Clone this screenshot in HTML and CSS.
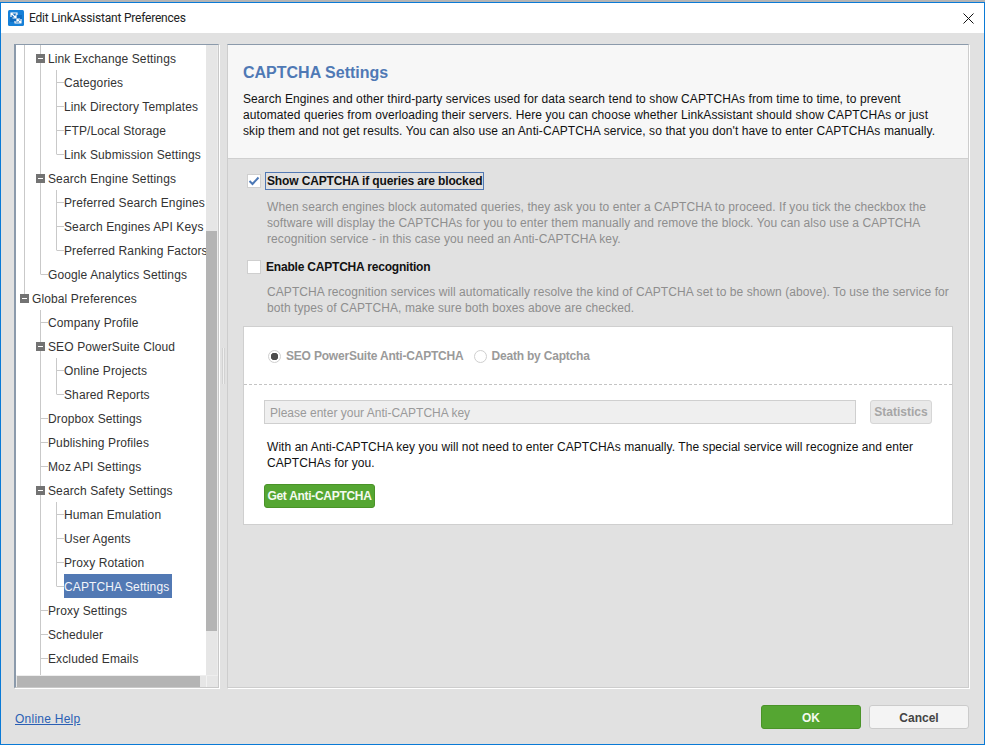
FILE: index.html
```html
<!DOCTYPE html>
<html lang="en">
<head>
<meta charset="utf-8">
<title>Edit LinkAssistant Preferences</title>
<link rel="stylesheet" href="styles.css">
</head>
<body>
<div class="window">
  <header class="titlebar">
    <svg class="app-icon" width="16" height="16" viewBox="0 0 16 16"><rect width="16" height="16" rx="1.5" fill="#1580d8"/><path d="M2 3v9h4v2h8V5h-4V3z" fill="#0f6cc0"/><path d="M3 7V3h6v2M3.5 3.5L8 8M8 4.5V8H4.5" fill="none" stroke="#fff" stroke-width="1.2"/><path d="M13 9v4H7v-2M12.5 12.5L9 9M9 12V9h3" fill="none" stroke="#fff" stroke-width="1.2"/></svg>
    <span class="title-text">Edit LinkAssistant Preferences</span>
    <svg class="close-icon" width="11" height="11" viewBox="0 0 11 11"><path d="M.5.5l10 10M10.5.5l-10 10" stroke="#111" stroke-width="1" fill="none"/></svg>
  </header>
  <div class="content">
    <div class="panes">
      <nav class="tree">
        <div class="tree-top">
          <div class="tree-view">
            <svg class="guides" width="191" height="630" viewBox="15 45 191 630">
              <path d="M24.5 45V294M40.5 45V274.5M56.5 70V154.5M56.5 190V250.5M40.5 310V675M56.5 358V394.5M56.5 502V586.5" fill="none" stroke="#c9c9c9"/>
              <path d="M57 82.5h7M57 106.5h7M57 130.5h7M57 154.5h7M57 202.5h7M57 226.5h7M57 250.5h7M41 274.5h7M41 322.5h7M57 370.5h7M57 394.5h7M41 418.5h7M41 442.5h7M41 466.5h7M57 514.5h7M57 538.5h7M57 562.5h7M57 586.5h7M41 610.5h7M41 634.5h7M41 658.5h7" fill="none" stroke="#c9c9c9"/>
            </svg>
            <div class="row l1 group"><i class="minus"></i><span>Link Exchange Settings</span></div>
            <div class="row l2"><span>Categories</span></div>
            <div class="row l2"><span>Link Directory Templates</span></div>
            <div class="row l2"><span>FTP/Local Storage</span></div>
            <div class="row l2"><span>Link Submission Settings</span></div>
            <div class="row l1 group"><i class="minus"></i><span>Search Engine Settings</span></div>
            <div class="row l2"><span>Preferred Search Engines</span></div>
            <div class="row l2"><span>Search Engines API Keys</span></div>
            <div class="row l2"><span>Preferred Ranking Factors</span></div>
            <div class="row l1"><span>Google Analytics Settings</span></div>
            <div class="row l0 group"><i class="minus"></i><span>Global Preferences</span></div>
            <div class="row l1"><span>Company Profile</span></div>
            <div class="row l1 group"><i class="minus"></i><span>SEO PowerSuite Cloud</span></div>
            <div class="row l2"><span>Online Projects</span></div>
            <div class="row l2"><span>Shared Reports</span></div>
            <div class="row l1"><span>Dropbox Settings</span></div>
            <div class="row l1"><span>Publishing Profiles</span></div>
            <div class="row l1"><span>Moz API Settings</span></div>
            <div class="row l1 group"><i class="minus"></i><span>Search Safety Settings</span></div>
            <div class="row l2"><span>Human Emulation</span></div>
            <div class="row l2"><span>User Agents</span></div>
            <div class="row l2"><span>Proxy Rotation</span></div>
            <div class="row l2"><span class="selected">CAPTCHA Settings</span></div>
            <div class="row l1"><span>Proxy Settings</span></div>
            <div class="row l1"><span>Scheduler</span></div>
            <div class="row l1"><span>Excluded Emails</span></div>
          </div>
          <div class="vscroll"><div class="vthumb"></div></div>
        </div>
        <div class="hscroll"><div class="hthumb"></div><div class="corner"></div></div>
      </nav>
      <div class="splitter"><div class="grip"></div></div>
      <main class="main">
        <section class="intro">
          <h1>CAPTCHA Settings</h1>
          <p>Search Engines and other third-party services used for data search tend to show CAPTCHAs from time to time, to prevent<br>automated queries from overloading their servers. Here you can choose whether LinkAssistant should show CAPTCHAs or just<br>skip them and not get results. You can also use an Anti-CAPTCHA service, so that you don't have to enter CAPTCHAs manually.</p>
        </section>
        <section class="settings">
          <div class="check-row first">
            <span class="checkbox"><svg width="12" height="10" viewBox="0 0 12 10"><path d="M1.5 5l3 3 6-6.5" fill="none" stroke="#4c78b6" stroke-width="2"/></svg></span>
            <span class="check-label focused">Show CAPTCHA if queries are blocked</span>
          </div>
          <p class="desc">When search engines block automated queries, they ask you to enter a CAPTCHA to proceed. If you tick the checkbox the<br>software will display the CAPTCHAs for you to enter them manually and remove the block. You can also use a CAPTCHA<br>recognition service - in this case you need an Anti-CAPTCHA key.</p>
          <div class="check-row second">
            <span class="checkbox"></span>
            <span class="check-label">Enable CAPTCHA recognition</span>
          </div>
          <p class="desc tight">CAPTCHA recognition services will automatically resolve the kind of CAPTCHA set to be shown (above). To use the service for<br>both types of CAPTCHA, make sure both boxes above are checked.</p>
          <div class="service">
            <div class="radios">
              <span class="radio on"></span><span class="radio-label">SEO PowerSuite Anti-CAPTCHA</span>
              <span class="radio second-radio"></span><span class="radio-label">Death by Captcha</span>
            </div>
            <div class="service-body">
              <div class="key-row">
                <div class="key-input">Please enter your Anti-CAPTCHA key</div>
                <div class="stats-btn">Statistics</div>
              </div>
              <p class="service-note">With an Anti-CAPTCHA key you will not need to enter CAPTCHAs manually. The special service will recognize and enter<br>CAPTCHAs for you.</p>
              <div class="btn green get-btn">Get Anti-CAPTCHA</div>
            </div>
          </div>
        </section>
      </main>
    </div>
    <footer class="footer">
      <a class="help" href="#">Online Help</a>
      <div class="actions">
        <div class="btn green ok-btn">OK</div>
        <div class="btn cancel-btn">Cancel</div>
      </div>
    </footer>
  </div>
</div>
</body>
</html>
```
FILE: styles.css
```css
* { box-sizing: border-box; }
html, body { margin: 0; padding: 0; }
body {
  width: 985px;
  height: 745px;
  overflow: hidden;
  background: #b4b4b4;
  padding-top: 2px;
  font: 12px/16px "Liberation Sans", Arial, sans-serif;
  color: #333;
}
.window {
  height: 743px;
  display: flex;
  flex-direction: column;
  background: #e1e1e1;
  border: 1px solid #0a7ad6;
}
.titlebar {
  height: 30px;
  flex: none;
  display: flex;
  align-items: center;
  background: #fff;
  padding: 0 10px 0 7px;
}
.app-icon { flex: none; }
.title-text {
  margin-left: 5px;
  font-family: Roboto, "Noto Sans", sans-serif;
  font-size: 12px;
  letter-spacing: -.2px;
  color: #222;
}
.close-icon { margin-left: auto; }
.content {
  flex: 1;
  min-height: 0;
  display: flex;
  flex-direction: column;
  padding: 11px 15px 0 13px;
}
.panes { height: 644px; flex: none; display: flex; }
.tree {
  width: 205px;
  flex: none;
  display: flex;
  flex-direction: column;
  background: #fff;
  border: 1px solid #c9c9c9;
  border-top-color: #8b9aab;
  border-left: 2px solid #8b9aab;
  box-shadow: 1px 1px 0 #fff;
}
.tree-top { flex: 1; min-height: 0; display: flex; }
.tree-view {
  position: relative;
  flex: 1;
  min-width: 0;
  overflow: hidden;
  padding-top: 1px;
}
.guides { position: absolute; left: -1px; top: 0; }
.row {
  position: relative;
  height: 24px;
  display: flex;
  align-items: center;
  white-space: nowrap;
  letter-spacing: .12px;
}
.row span { height: 24px; line-height: 26px; }
.l0 { padding-left: 16px; }
.l1 { padding-left: 32px; }
.l2 { padding-left: 48px; }
.group.l0 { padding-left: 4px; }
.group.l1 { padding-left: 20px; }
.minus {
  flex: none;
  width: 9px;
  height: 9px;
  margin-right: 3px;
  margin-top: 1px;
  background: linear-gradient(#fff, #fff) center / 5px 1px no-repeat #737373;
}
.selected { background: #5279b4; color: #f2f5fa; padding-right: 3px; }
.vscroll {
  width: 12px;
  flex: none;
  background: #e6e6e6;
  padding-top: 186px;
  border-right: 1px solid #ececec;
}
.vthumb { height: 400px; background: #b4b4b4; }
.hscroll {
  height: 12px;
  flex: none;
  display: flex;
  background: #e6e6e6;
  border-top: 1px solid #eee;
  padding-left: 1px;
}
.hthumb { width: 183px; background: #b4b4b4; }
.corner { margin-left: auto; width: 12px; border-left: 1px solid #f2f2f2; }
.splitter {
  width: 8px;
  flex: none;
  display: flex;
  align-items: center;
  justify-content: center;
}
.grip {
  width: 3px;
  height: 36px;
  border-left: 1px solid #d2d2d2;
  border-right: 1px solid #d2d2d2;
  background: #efefef;
}
.main {
  flex: 1;
  min-width: 0;
  display: flex;
  flex-direction: column;
  border: 1px solid #cdcdcd;
  border-top-color: #8b9aab;
  box-shadow: 1px 1px 0 #fff;
}
.intro {
  height: 114px;
  flex: none;
  background: #f7f7f7;
  border-bottom: 1px solid #cfcfcf;
  padding: 18px 15px 0;
}
.intro h1 {
  margin: 0 0 8px;
  font-size: 16px;
  line-height: 20px;
  font-weight: bold;
  color: #4f79b5;
}
.intro p { margin: 0; color: #111; white-space: nowrap; letter-spacing: .09px; }
.settings { flex: 1; padding: 0 15px; }
.check-row { display: flex; align-items: center; height: 18px; }
.check-row.first { margin-top: 13px; padding-left: 4px; }
.check-row.second { margin-top: 11px; padding-left: 4px; }
.checkbox {
  width: 14px;
  height: 14px;
  flex: none;
  display: flex;
  align-items: center;
  justify-content: center;
  background: #fff;
  border: 1px solid #cfcfcf;
}
.check-label {
  margin-left: 3px;
  font-weight: bold;
  color: #111;
  padding: 0 1px;
  line-height: 16px;
  border: 1px solid transparent;
  white-space: nowrap;
  letter-spacing: -.2px;
}
.focused { margin-left: 4px; border-color: #5279b4; letter-spacing: -.14px; }
.desc {
  margin: 9px 0 0;
  padding-left: 24px;
  color: #8e8e8e;
  white-space: nowrap;
  letter-spacing: .08px;
}
.desc.tight { margin-top: 8px; }
.service {
  margin-top: 10px;
  height: 199px;
  background: #fff;
  border: 1px solid #cfcfcf;
}
.radios {
  height: 58px;
  display: flex;
  align-items: center;
  padding: 1px 0 0 24px;
  border-bottom: 1px dashed #c4c4c4;
  font-weight: bold;
  color: #9a9a9a;
  letter-spacing: -.2px;
}
.radio {
  width: 13px;
  height: 13px;
  flex: none;
  border-radius: 50%;
  background: #fff;
  border: 1px solid #cfcfcf;
}
.radio.on { background: radial-gradient(circle, #4d4d4d 0 3.5px, #fff 4px); }
.second-radio { margin-left: 10px; }
.radio-label { margin-left: 5px; white-space: nowrap; }
.service-body { padding: 15px 20px 0; }
.key-row { display: flex; align-items: flex-start; }
.key-input {
  width: 592px;
  height: 24px;
  background: #efefef;
  border: 1px solid #cfcfcf;
  padding-left: 5px;
  line-height: 25px;
  color: #9a9a9a;
}
.stats-btn {
  margin-left: 14px;
  width: 62px;
  height: 24px;
  background: #e9e9e9;
  border: 1px solid #d6d6d6;
  border-radius: 3px;
  text-align: center;
  line-height: 23px;
  font-weight: bold;
  color: #a6a6a6;
}
.service-note { margin: 15px 0 0; padding-left: 3px; color: #111; white-space: nowrap; letter-spacing: .06px; }
.btn {
  height: 24px;
  display: flex;
  align-items: center;
  justify-content: center;
  border-radius: 3px;
  font-weight: bold;
}
.green { background: #55a632; border: 1px solid #4a9328; color: #f4faf0; }
.get-btn { margin-top: 13px; width: 111px; letter-spacing: -.3px; }
.footer {
  flex: 1;
  display: flex;
  align-items: flex-start;
  justify-content: space-between;
  padding: 17px 0 0 1px;
}
.help { margin-top: 6px; color: #2a5fb4; text-decoration: underline; letter-spacing: .25px; }
.actions { display: flex; gap: 8px; }
.ok-btn, .cancel-btn { width: 100px; padding-top: 1px; }
.cancel-btn { background: #f4f4f4; border: 1px solid #cbcbcb; color: #444; }
```
